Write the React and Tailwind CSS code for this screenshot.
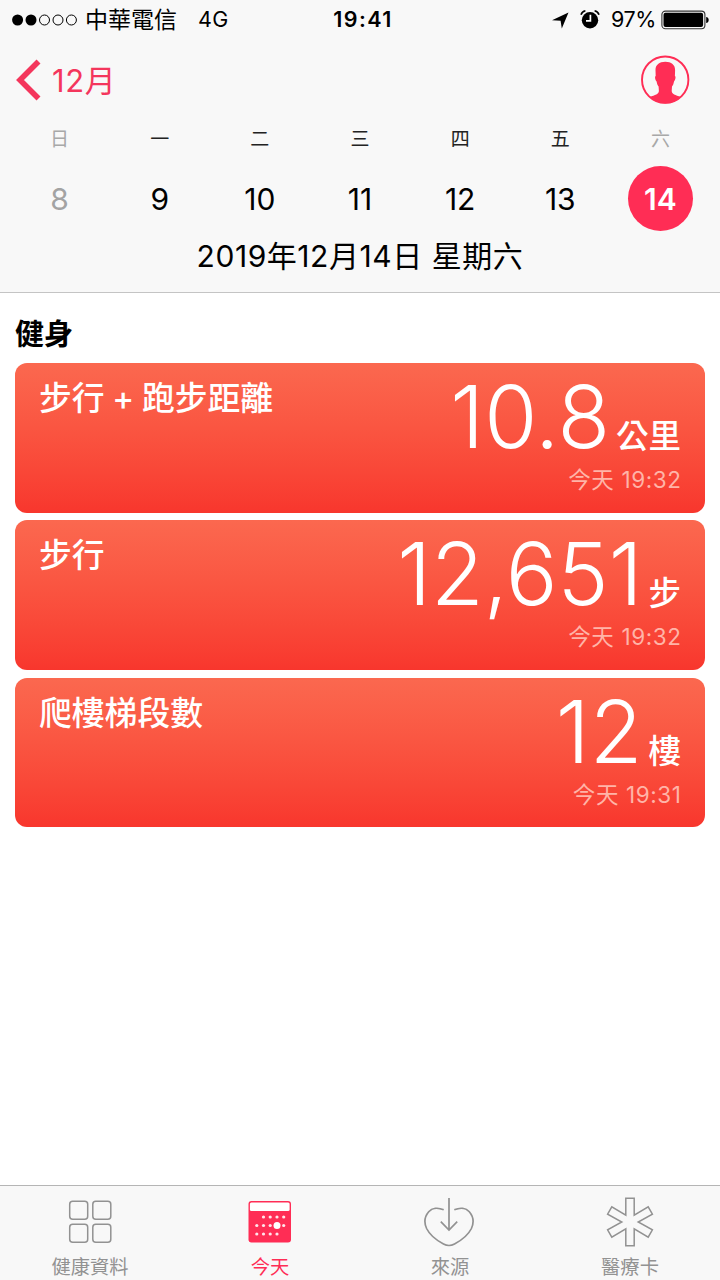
import React from 'react';

const days = [
  { name: '日', date: '8', muted: true },
  { name: '一', date: '9' },
  { name: '二', date: '10' },
  { name: '三', date: '11' },
  { name: '四', date: '12' },
  { name: '五', date: '13' },
  { name: '六', date: '14', muted: true, selected: true },
];

const cards = [
  { title: '步行 + 跑步距離', value: '10.8', unit: '公里', time: '今天 19:32' },
  { title: '步行', value: '12,651', unit: '步', time: '今天 19:32' },
  { title: '爬樓梯段數', value: '12', unit: '樓', time: '今天 19:31' },
];

function StatusBar() {
  return (
    <div className="grid h-10 grid-cols-[1fr_auto_1fr] items-center pl-3 pr-[11px] text-[21.5px] leading-none text-black">
      <div className="flex items-center">
        <svg width="66" height="12" viewBox="0 0 66 12" fill="none" stroke="#000">
          <circle cx="5.6" cy="6" r="5.5" fill="#000" stroke="none" />
          <circle cx="19" cy="6" r="5.5" fill="#000" stroke="none" />
          <circle cx="32.5" cy="6" r="5" />
          <circle cx="46" cy="6" r="5" />
          <circle cx="59.4" cy="6" r="5" />
        </svg>
        <span className="ml-[7px] text-[23px]">中華電信</span>
        <span className="ml-[21px] tracking-[0.4px]">4G</span>
      </div>
      <span className="ml-[5px] text-[21.5px] font-semibold tracking-[1.4px]">19:41</span>
      <div className="flex items-center justify-end">
        <svg width="17" height="17" viewBox="0 0 17 17">
          <path d="M16.5.5 9.8 16.6 8.6 8.8 0 8.3Z" fill="#000" />
        </svg>
        <svg className="ml-[11px]" width="20" height="20" viewBox="0 0 20 20">
          <circle cx="10" cy="10.2" r="8.2" fill="#000" />
          <path d="M1 4.8A6 6 0 0 1 5.4 .8M19 4.8A6 6 0 0 0 14.6 .8" stroke="#000" strokeWidth="1.6" fill="none" />
          <path d="M10.4 4.8v6H6" stroke="#fff" strokeWidth="1.7" fill="none" />
        </svg>
        <span className="ml-[11px] tracking-[-0.4px]">97%</span>
        <svg className="ml-[5px]" width="48" height="20" viewBox="0 0 48 20">
          <rect x="0.9" y="1.1" width="43" height="17.6" rx="3.5" fill="none" stroke="#333" strokeWidth="1.1" />
          <rect x="2.5" y="2.7" width="39.6" height="14.4" rx="2" fill="#000" />
          <path d="M45.2 7c1.6 .3 2.5 1.4 2.5 3s-.9 2.7-2.5 3z" fill="#000" />
        </svg>
      </div>
    </div>
  );
}

function NavBar() {
  return (
    <div className="flex h-20 items-center justify-between pl-4 pr-[30px] text-[#f4365c]">
      <div className="flex items-center">
        <svg width="25" height="42" viewBox="0 0 25 42" fill="none" stroke="currentColor" strokeWidth="5.6">
          <path d="M22.500 2.500 4 21 22.500 39.500" />
        </svg>
        <span className="ml-[11px] text-[31px] leading-none tracking-[0.6px]">12月</span>
      </div>
      <svg width="50" height="50" viewBox="0 0 50 50">
        <circle cx="25.2" cy="24.7" r="23.200" fill="none" stroke="#ff2d55" strokeWidth="1.900" />
        <path
          d="M25.300 6.700c6 0 9.900 3 9.800 8.500l-.2 5.800c1.100.5.700 3.700-.9 5.500-.4 2.300-1 3.800-2 5l-.3 4.500c.1 3 3.500 4 9.300 6A24 24 0 0 1 25.200 48.500a24 24 0 0 1-15.700-6.500c5.800-2 9.300-3 9.400-6l-.3-4.500c-1-1.200-1.600-2.700-2-5-1.600-1.800-2-5-.9-5.500l-.2-5.800c-.1-5.500 3.800-8.500 9.800-8.500Z"
          fill="#ff2d55"
        />
      </svg>
    </div>
  );
}

function WeekStrip() {
  return (
    <div className="grid grid-cols-7 px-[9.500px]">
      {days.map((d) => (
        <div key={d.name} className="flex flex-col items-center">
          <span className={`flex h-[38px] items-center text-[19px] leading-none ${d.muted ? 'text-[#a8a8a8]' : 'text-[#222]'}`}>
            {d.name}
          </span>
          <span
            className={`mt-2 flex size-[65px] items-center justify-center rounded-full text-[30px] leading-none ${
              d.selected ? 'bg-[#ff2d55] font-semibold text-white' : d.muted ? 'text-[#a3a3a3]' : 'text-black'
            }`}
          >
            {d.date}
          </span>
        </div>
      ))}
    </div>
  );
}

function Card({ title, value, unit, time }) {
  return (
    <article className="flex h-[149.500px] justify-between rounded-xl bg-linear-to-b from-[#fb684f] to-[#f8362d] pl-6 pr-6 text-white">
      <h3 className="mt-[18px] text-[32.800px] font-medium leading-[34px] [word-spacing:-1px]">{title}</h3>
      <div className="flex flex-col items-end">
        <div className="flex h-[105px] items-baseline">
          <span className="text-[86px] font-light leading-[108px]">{value}</span>
          <span className="ml-[6px] text-[32.500px] font-medium leading-none">{unit}</span>
        </div>
        <span className="-mr-[0.600px] text-[22.500px] leading-[23px] tracking-[0.600px] text-[#ffb4a8]">{time}</span>
      </div>
    </article>
  );
}

function GridIcon() {
  return (
    <svg width="44" height="44" viewBox="0 0 44 44" fill="none" stroke="#929292" strokeWidth="1.500">
      <rect x="1.700" y="1.200" width="18" height="18" rx="3" />
      <rect x="24.800" y="1.200" width="18" height="18" rx="3" />
      <rect x="1.700" y="24.300" width="18" height="18" rx="3" />
      <rect x="24.800" y="24.300" width="18" height="18" rx="3" />
    </svg>
  );
}

function CalendarIcon() {
  const dots = [
    [15.5, 17], [22.2, 17], [29, 17], [35.7, 17],
    [8.8, 25.5], [15.5, 25.5], [22.2, 25.5], [35.7, 25.5],
    [8.8, 34], [15.5, 34], [22.2, 34], [29, 34],
  ];
  return (
    <svg width="44" height="44" viewBox="0 0 44 44">
      <rect x="0.500" y="1" width="42.500" height="41.500" rx="3" fill="#ff2d55" />
      <rect x="1.900" y="2.500" width="39.700" height="8.500" rx="1.500" fill="#fff" />
      {dots.map(([x, y]) => (
        <circle key={`${x}-${y}`} cx={x} cy={y} r="1.600" fill="#ffe5ea" />
      ))}
      <circle cx="29" cy="25.500" r="3.500" fill="#fff" />
    </svg>
  );
}

function SourceIcon() {
  return (
    <svg width="52" height="50" viewBox="0 0 52 50" fill="none" stroke="#929292" strokeWidth="1.700">
      <path d="M19.700 12.700C14 10.300 8 10.800 4.700 14.700 .6 19.500 .1 26 2.600 31.500 6 38.500 13.500 43.800 19.500 47 23 48.900 27 48.900 30.500 47 36.500 43.800 44 38.500 47.400 31.500 49.900 26 49.400 19.500 45.300 14.700 42 10.800 36 10.300 30.300 12.700" />
      <path d="M25 1v32M16.800 24.700l8.200 8.300 8.200-8.300" />
    </svg>
  );
}

function MedicalIcon() {
  return (
    <svg width="48" height="50" viewBox="0 0 48 50" fill="none" stroke="#929292" strokeWidth="1.500">
      <path d="M19.800 1.200h8.400v17l14-8.300 4.200 7.300L32.200 25l14.200 7.800-4.200 7.300-14-8.300v17h-8.400v-17l-14 8.300-4.200-7.300L15.800 25 1.600 17.200l4.200-7.300 14 8.300Z" />
    </svg>
  );
}

const tabs = [
  { label: '健康資料', Icon: GridIcon },
  { label: '今天', Icon: CalendarIcon, active: true },
  { label: '來源', Icon: SourceIcon },
  { label: '醫療卡', Icon: MedicalIcon },
];

export default function App() {
  return (
    <div className="flex h-[1280px] w-[720px] flex-col bg-white font-['Inter','Noto_Sans_CJK_TC',sans-serif]" lang="zh-Hant">
      <header className="h-[293px] border-b border-[#c4c4c4] bg-[#f8f8f8]">
        <StatusBar />
        <NavBar />
        <WeekStrip />
        <p className="mt-2 text-center text-[30px] leading-[34px] tracking-[0.550px]">2019年12月14日 星期六</p>
      </header>
      <main className="flex-1 px-[15px]">
        <h2 className="pt-[25px] text-[29px] font-bold leading-[34px]">健身</h2>
        <div className="mt-[11px] flex flex-col gap-[7.800px]">
          {cards.map((c) => (
            <Card key={c.title} {...c} />
          ))}
        </div>
      </main>
      <nav className="grid h-[95px] grid-cols-4 border-t border-[#b5b5b5] bg-[#f8f8f8]">
        {tabs.map(({ label, Icon, active }) => (
          <div key={label} className={`flex flex-col items-center ${active ? 'text-[#ff2d55]' : 'text-[#929292]'}`}>
            <div className="mt-[10px] flex h-[51px] items-center">
              <Icon />
            </div>
            <span className="mt-[10px] text-[19.300px] leading-5">{label}</span>
          </div>
        ))}
      </nav>
    </div>
  );
}
